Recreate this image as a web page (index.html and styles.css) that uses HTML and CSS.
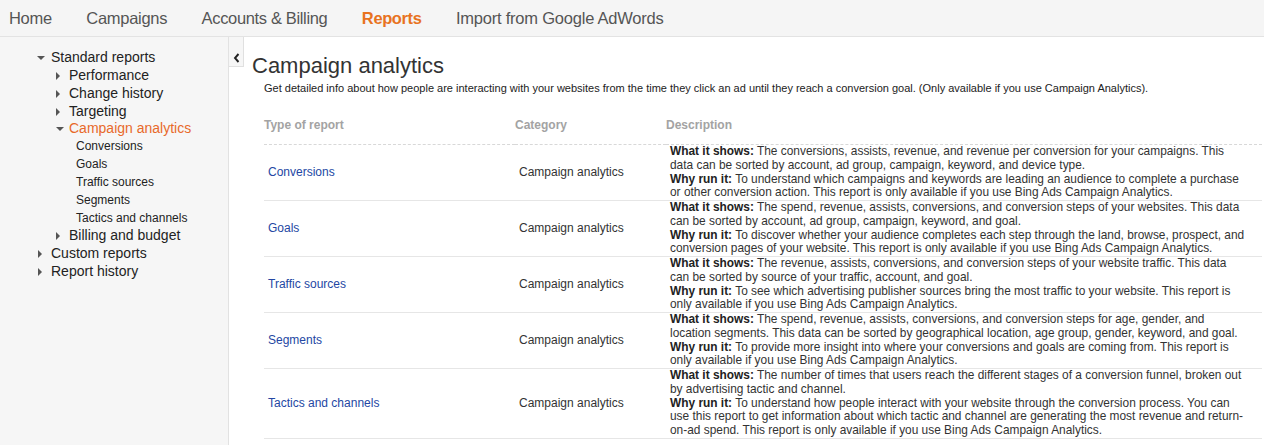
FILE: index.html
```html
<!DOCTYPE html>
<html>
<head>
<meta charset="utf-8">
<link rel="stylesheet" href="styles.css">
</head>
<body>
<nav class="topnav">
  <a class="nav-item">Home</a>
  <a class="nav-item">Campaigns</a>
  <a class="nav-item tight">Accounts &amp; Billing</a>
  <a class="nav-item active">Reports</a>
  <a class="nav-item loose">Import from Google AdWords</a>
</nav>
<div class="layout">
  <aside class="sidebar">
    <ul class="tree">
      <li class="node l0 open"><span class="tri down"></span>Standard reports</li>
      <li class="node l1"><span class="tri right"></span>Performance</li>
      <li class="node l1"><span class="tri right"></span>Change history</li>
      <li class="node l1"><span class="tri right"></span>Targeting</li>
      <li class="node l1 current"><span class="tri down"></span>Campaign analytics</li>
      <li class="node l2">Conversions</li>
      <li class="node l2">Goals</li>
      <li class="node l2">Traffic sources</li>
      <li class="node l2">Segments</li>
      <li class="node l2">Tactics and channels</li>
      <li class="node l1"><span class="tri right"></span>Billing and budget</li>
      <li class="node l0"><span class="tri right"></span>Custom reports</li>
      <li class="node l0"><span class="tri right"></span>Report history</li>
    </ul>
  </aside>
  <div class="toggle-col">
    <div class="toggle">
      <svg width="7" height="10" viewBox="0 0 7 10"><path d="M5.5 1 L2 5 L5.5 9" fill="none" stroke="#222" stroke-width="1.9"/></svg>
    </div>
  </div>
  <main class="main">
    <h1 class="title">Campaign analytics</h1>
    <p class="subtitle">Get detailed info about how people are interacting with your websites from the time they click an ad until they reach a conversion goal. (Only available if you use Campaign Analytics).</p>
    <table class="reports">
      <colgroup><col class="c1"><col class="c2"><col class="c3"></colgroup>
      <thead>
        <tr><th>Type of report</th><th>Category</th><th>Description</th></tr>
      </thead>
      <tbody>
        <tr>
          <td><a class="link">Conversions</a></td>
          <td>Campaign analytics</td>
          <td class="desc"><b>What it shows:</b> The conversions, assists, revenue, and revenue per conversion for your campaigns. This<br>data can be sorted by account, ad group, campaign, keyword, and device type.<br><b>Why run it:</b> To understand which campaigns and keywords are leading an audience to complete a purchase<br>or other conversion action. This report is only available if you use Bing Ads Campaign Analytics.</td>
        </tr>
        <tr>
          <td><a class="link">Goals</a></td>
          <td>Campaign analytics</td>
          <td class="desc"><b>What it shows:</b> The spend, revenue, assists, conversions, and conversion steps of your websites. This data<br>can be sorted by account, ad group, campaign, keyword, and goal.<br><b>Why run it:</b> To discover whether your audience completes each step through the land, browse, prospect, and<br>conversion pages of your website. This report is only available if you use Bing Ads Campaign Analytics.</td>
        </tr>
        <tr>
          <td><a class="link">Traffic sources</a></td>
          <td>Campaign analytics</td>
          <td class="desc"><b>What it shows:</b> The revenue, assists, conversions, and conversion steps of your website traffic. This data<br>can be sorted by source of your traffic, account, and goal.<br><b>Why run it:</b> To see which advertising publisher sources bring the most traffic to your website. This report is<br>only available if you use Bing Ads Campaign Analytics.</td>
        </tr>
        <tr>
          <td><a class="link">Segments</a></td>
          <td>Campaign analytics</td>
          <td class="desc"><b>What it shows:</b> The spend, revenue, assists, conversions, and conversion steps for age, gender, and<br>location segments. This data can be sorted by geographical location, age group, gender, keyword, and goal.<br><b>Why run it:</b> To provide more insight into where your conversions and goals are coming from. This report is<br>only available if you use Bing Ads Campaign Analytics.</td>
        </tr>
        <tr>
          <td><a class="link">Tactics and channels</a></td>
          <td>Campaign analytics</td>
          <td class="desc"><b>What it shows:</b> The number of times that users reach the different stages of a conversion funnel, broken out<br>by advertising tactic and channel.<br><b>Why run it:</b> To understand how people interact with your website through the conversion process. You can<br>use this report to get information about which tactic and channel are generating the most revenue and return-<br>on-ad spend. This report is only available if you use Bing Ads Campaign Analytics.</td>
        </tr>
      </tbody>
    </table>
  </main>
</div>
</body>
</html>
```
FILE: styles.css
```css
* { box-sizing: border-box; }
html, body { margin: 0; padding: 0; }
body {
  font-family: "Liberation Sans", Arial, sans-serif;
  color: #333;
  background: #fff;
  width: 1264px;
  height: 445px;
  overflow: hidden;
}
.topnav {
  height: 37px;
  background: #f5f5f5;
  border-bottom: 1px solid #e3e3e3;
  display: flex;
  align-items: center;
  gap: 34.5px;
  padding-left: 9px;
  padding-top: 1px;
}
.nav-item {
  font-size: 16.5px;
  color: #555;
  letter-spacing: -0.3px;
}
.nav-item.tight { letter-spacing: -0.35px; }
.nav-item.loose { letter-spacing: -0.22px; }
.nav-item.active {
  color: #e8731f;
  font-weight: bold;
  letter-spacing: -0.4px;
}
.layout {
  display: flex;
  height: 408px;
}
.sidebar {
  width: 229px;
  flex: none;
  background: #f6f6f6;
  border-right: 1px solid #e2e2e2;
  padding-top: 12px;
}
.tree {
  list-style: none;
  margin: 0;
  padding: 0;
}
.node {
  line-height: 17.85px;
  height: 17.85px;
  font-size: 14px;
  color: #222;
  position: relative;
}
.node.l0 { padding-left: 51px; }
.node.l1 { padding-left: 69px; }
.node.l2 { padding-left: 76px; font-size: 12px; }
.node.current { color: #e8692a; }
.tri {
  position: absolute;
  width: 0;
  height: 0;
}
.l0 .tri { left: 38px; }
.l1 .tri { left: 56px; }
.tri.right {
  top: 5px;
  border-top: 4px solid transparent;
  border-bottom: 4px solid transparent;
  border-left: 4px solid #555;
}
.tri.down {
  top: 7px;
  border-left: 4px solid transparent;
  border-right: 4px solid transparent;
  border-top: 4px solid #555;
}
.l0 .tri.down { left: 37px; }
.l1 .tri.down { left: 56px; }
.toggle-col {
  width: 15px;
  flex: none;
}
.toggle {
  width: 15px;
  height: 30px;
  background: #f6f6f6;
  border: 1px solid #e0e0e0;
  border-left: none;
  border-top: none;
  display: flex;
  align-items: flex-start;
  justify-content: center;
  padding-top: 16px;
}
.toggle svg { display: block; }
.main {
  flex: 1;
  padding: 16px 2px 0 8px;
}
.title {
  margin: 0;
  font-size: 22px;
  font-weight: normal;
  line-height: 26px;
  color: #333;
}
.subtitle {
  margin: 2px 0 0 12px;
  font-size: 11px;
  line-height: 14px;
  color: #222;
}
.reports {
  margin: 18px 0 0 12px;
  width: 998px;
  border-collapse: collapse;
  table-layout: fixed;
  font-size: 12px;
}
.c1 { width: 251px; }
.c2 { width: 151px; }
.reports th {
  text-align: left;
  font-weight: bold;
  color: #a3a3a3;
  font-size: 12px;
  line-height: 16px;
  padding: 4px 0 11px 0;
  border-bottom: 1px dashed #d8d8d8;
}
.reports td {
  padding: 0 4px;
  vertical-align: middle;
  color: #333;
  line-height: 13.75px;
  border-bottom: 1px solid #e6e6e6;
}
.reports td.desc {
  padding-right: 0;
  white-space: nowrap;
  font-size: 11.9px;
}
.reports td.desc b { color: #222; }
.link { color: #2447a3; }
```
